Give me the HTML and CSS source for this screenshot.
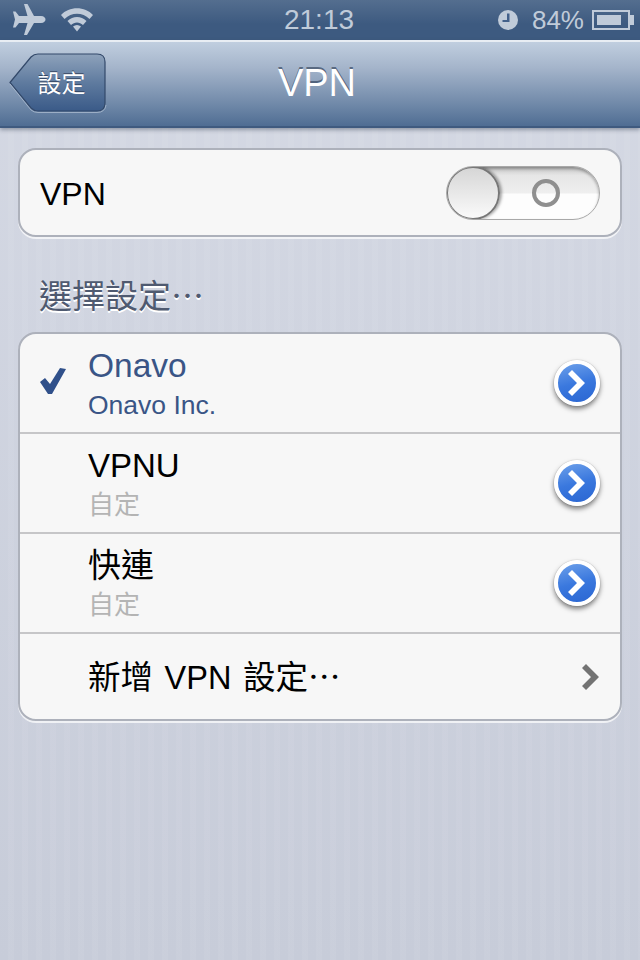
FILE: index.html
```html
<!DOCTYPE html>
<html lang="zh-Hant">
<head>
    <meta charset="UTF-8">
    <meta name="viewport" content="width=device-width, initial-scale=1.0">
    <title>VPN</title>
    <link rel="stylesheet" href="styles.css">
</head>
<body>
    <div class="phone">
        <div class="status">
            <div class="status-side">
                <svg class="icon-plane" width="34" height="32" viewBox="0 0 34 32"><path d="M12 0 L15.5 0 L22 12 L29 12 C32 12 33.5 14 33.5 15.5 C33.5 17 32 19 29 19 L22 19 L15 31 L12 31 L15.5 19 L7 19 L3.5 23.5 L1 23.5 L3 15.5 L1 7.5 L3.5 7.5 L7 12 L15.5 12 Z"/></svg>
                <svg class="icon-wifi" width="32" height="25" viewBox="0 0 32 25"><path d="M0 8 C8 -1 24 -1 32 8 L28.5 12 C21.5 5 10.5 5 3.5 12 Z M6.5 14 C12 8.5 20 8.5 25.5 14 L22 18 C18.5 14.5 13.5 14.5 10 18 Z M12 19.5 C14.5 17.5 17.5 17.5 20 19.5 L16 24.5 Z"/></svg>
            </div>
            <div class="status-time">21:13</div>
            <div class="status-side status-right">
                <svg class="icon-clock" width="20" height="20" viewBox="0 0 20 20"><circle cx="10" cy="10" r="10"/><path d="M9 3.5 H11.5 V12 H4.5 V10 H9 Z" class="clock-hand"/></svg>
                <span class="battery-pct">84%</span>
                <div class="battery"><div class="battery-level"></div></div>
                <div class="battery-tip"></div>
            </div>
        </div>

        <div class="nav">
            <div class="nav-left">
                <a class="back">
                    <svg class="back-bg" width="98" height="60" viewBox="0 0 98 60">
                        <defs>
                            <linearGradient id="backFill" x1="0" y1="0" x2="0" y2="1">
                                <stop offset="0" stop-color="#8ea2bb"/>
                                <stop offset="0.5" stop-color="#5f7b9f"/>
                                <stop offset="1" stop-color="#3a5a88"/>
                            </linearGradient>
                        </defs>
                        <path d="M1 29.5 L22 4 Q25 1 29 1 L88 1 Q96 1 96 9 L96 50 Q96 58 88 58 L29 58 Q25 58 22 55 Z" fill="url(#backFill)" stroke="#33496a" stroke-width="1.2"/>
                        <path d="M1 31 L22 57 Q25 59.5 29 59.5 L88 59.5 Q96 59.5 97 52" fill="none" stroke="#b5c3d5" stroke-opacity="0.7"/>
                    </svg>
                    <span class="back-label">設定</span>
                </a>
            </div>
            <div class="nav-title">VPN</div>
            <div></div>
        </div>

        <div class="content">
            <div class="card">
                <div class="row row-switch">
                    <span class="row-title">VPN</span>
                    <div class="switch">
                        <div class="switch-ring"></div>
                        <div class="switch-knob"></div>
                    </div>
                </div>
            </div>

            <div class="section-head">選擇設定⋯</div>

            <div class="card">
                <div class="row row-tall">
                    <div class="row-check">
                        <svg class="check" width="28" height="28" viewBox="0 0 28 28"><path d="M0 14 L5 10 L10 16 L20 0 L26 1 L12 26 L8 26 Z" fill="#30508a"/></svg>
                    </div>
                    <div class="row-text">
                        <div class="row-name selected">Onavo</div>
                        <div class="row-sub selected">Onavo Inc.</div>
                    </div>
                    <div class="detail"><svg width="22" height="28" viewBox="0 0 22 28"><path d="M2 5 L6 1 L19 14 L6 27 L2 23 L11 14 Z" fill="#fff"/></svg></div>
                </div>
                <div class="row row-tall">
                    <div class="row-check"></div>
                    <div class="row-text">
                        <div class="row-name">VPNU</div>
                        <div class="row-sub">自定</div>
                    </div>
                    <div class="detail"><svg width="22" height="28" viewBox="0 0 22 28"><path d="M2 5 L6 1 L19 14 L6 27 L2 23 L11 14 Z" fill="#fff"/></svg></div>
                </div>
                <div class="row row-tall">
                    <div class="row-check"></div>
                    <div class="row-text">
                        <div class="row-name">快連</div>
                        <div class="row-sub">自定</div>
                    </div>
                    <div class="detail"><svg width="22" height="28" viewBox="0 0 22 28"><path d="M2 5 L6 1 L19 14 L6 27 L2 23 L11 14 Z" fill="#fff"/></svg></div>
                </div>
                <div class="row row-add">
                    <div class="row-check"></div>
                    <div class="row-text">
                        <div class="row-name add-name">新增 VPN 設定⋯</div>
                    </div>
                    <svg class="chevron" width="18" height="26" viewBox="0 0 18 26"><path d="M4 0 L17 13 L4 26 L0 22 L9 13 L0 4 Z" fill="#737373"/></svg>
                </div>
            </div>
        </div>
    </div>
</body>
</html>
```

FILE: styles.css
```css
* {
    box-sizing: border-box;
}
html, body {
    margin: 0;
    padding: 0;
}
body {
    width: 640px;
    height: 960px;
    overflow: hidden;
    font-family: "Liberation Sans", "Noto Sans CJK TC", sans-serif;
}
.phone {
    width: 640px;
    height: 960px;
    display: flex;
    flex-direction: column;
    background-color: #cbd0dc;
    background-image:
        repeating-linear-gradient(90deg, rgba(255,255,255,0) 0, rgba(255,255,255,0) 8px, rgba(255,255,255,0.05) 8px, rgba(255,255,255,0.05) 14px),
        linear-gradient(180deg, #d5d9e4 0%, #c7ccd9 100%);
}

/* status bar */
.status {
    height: 40px;
    flex-shrink: 0;
    display: grid;
    grid-template-columns: 1fr auto 1fr;
    align-items: center;
    padding: 0 6px 0 12px;
    color: #c0cbd9;
    background: linear-gradient(180deg, #546e8f 0%, #3d5a80 60%, #3d5a80 100%);
}
.status-side {
    display: flex;
    align-items: center;
}
.status-right {
    justify-content: flex-end;
}
.status-side svg {
    fill: #c0cbd9;
}
.icon-wifi {
    margin-left: 15px;
    margin-bottom: 2px;
}
.clock-hand {
    fill: #42608a;
}
.status-time {
    font-size: 28px;
    margin-left: -8px;
}
.battery-pct {
    font-size: 26px;
    margin-left: 14px;
}
.battery {
    width: 38px;
    height: 20px;
    margin-left: 8px;
    padding: 3px;
    border: 2px solid #c0cbd9;
}
.battery-level {
    width: 84%;
    height: 100%;
    background: #c0cbd9;
}
.battery-tip {
    width: 4px;
    height: 10px;
    background: #c0cbd9;
}

/* nav bar */
.nav {
    height: 88px;
    flex-shrink: 0;
    display: grid;
    grid-template-columns: 1fr auto 1fr;
    align-items: center;
    padding: 0 9px;
    border-top: 2px solid #e8edf3;
    border-bottom: 2px solid #3f5a7f;
    background: linear-gradient(180deg, #c0cedf 0%, #a5b5cb 30%, #6f88a8 75%, #4f6d93 100%);
    box-shadow: 0 2px 4px rgba(60,70,90,0.45);
}
.back {
    position: relative;
    display: flex;
    align-items: center;
    justify-content: center;
    width: 98px;
    height: 60px;
    padding: 0 0 4px 7px;
    margin-bottom: 2px;
}
.back-bg {
    position: absolute;
    left: 0;
    top: 0;
}
.back-label {
    position: relative;
    color: #fff;
    font-size: 24px;
    text-shadow: 0 -1px 0 rgba(30,45,70,0.7);
}
.nav-title {
    color: #fff;
    font-size: 38px;
    margin-left: -6px;
    margin-bottom: 2px;
    text-shadow: 0 -2px 0 rgba(40,55,80,0.6);
}

/* main list */
.content {
    flex: 1;
    padding: 20px 18px 0;
}
.card {
    width: 604px;
    background: #f7f7f7;
    border: 2px solid #adb1bb;
    border-radius: 18px;
    box-shadow: 0 2px 0 rgba(255,255,255,0.7);
    overflow: hidden;
}
.row {
    display: flex;
    align-items: center;
}
.row + .row {
    border-top: 2px solid #c6c6c8;
}
.row-switch {
    height: 85px;
    padding: 0 20px;
    justify-content: space-between;
}
.row-title {
    font-size: 32px;
    margin-top: 3px;
    color: #000;
}
.row-tall {
    height: 100px;
}
.card .row-tall:first-child {
    height: 98px;
}
.row-add {
    height: 87px;
}
.row-check {
    width: 68px;
    padding-left: 20px;
    flex-shrink: 0;
    display: flex;
    align-items: center;
}
.check {
    margin-bottom: 3px;
}
.row-text {
    flex: 1;
}
.row-name {
    font-size: 33px;
    line-height: 38px;
    color: #000;
}
.row-name.add-name {
    font-size: 32.5px;
    word-spacing: 2.5px;
    margin-top: 2px;
}
.row-sub {
    font-size: 26px;
    line-height: 30px;
    margin-top: 5px;
    color: #b4b4b4;
}
.row-name.selected {
    font-size: 33.5px;
    color: #3a5586;
}
.row-sub.selected {
    font-size: 26.5px;
    color: #3a5586;
}
.section-head {
    height: 95px;
    padding: 40px 0 0 21px;
    font-size: 33px;
    line-height: 40px;
    color: #4f5a70;
    text-shadow: 0 2px 0 #fff;
}

/* switch */
.switch {
    position: relative;
    width: 154px;
    height: 54px;
    margin-top: 1px;
    border-radius: 27px;
    border: 1px solid #a8a8a8;
    overflow: hidden;
    background: linear-gradient(180deg, #c4c4c4 0%, #e6e6e6 16%, #efefef 50%, #fdfdfd 52%, #fdfdfd 100%);
    box-shadow: inset 0 2px 3px rgba(0,0,0,0.3);
}
.switch-knob {
    position: absolute;
    left: -1px;
    top: -1px;
    width: 54px;
    height: 54px;
    border-radius: 50%;
    border: 2px solid #777;
    background: linear-gradient(180deg, #d6d6d6 0%, #fafafa 100%);
    box-shadow: 2px 0 3px rgba(0,0,0,0.35);
}
.switch-ring {
    position: absolute;
    left: 85px;
    top: 12px;
    width: 28px;
    height: 28px;
    border-radius: 50%;
    border: 4px solid #8f8f8f;
}

/* accessory buttons */
.detail {
    width: 46px;
    height: 46px;
    margin-right: 20px;
    flex-shrink: 0;
    display: flex;
    align-items: center;
    justify-content: center;
    border-radius: 50%;
    border: 4px solid #fff;
    background: linear-gradient(165deg, #6da0ea 0%, #3a78de 50%, #2a66d2 100%);
    box-shadow: 0 3px 5px rgba(0,0,0,0.5), 0 0 1px rgba(0,0,0,0.4);
}
.chevron {
    margin-right: 20px;
    flex-shrink: 0;
}
```
